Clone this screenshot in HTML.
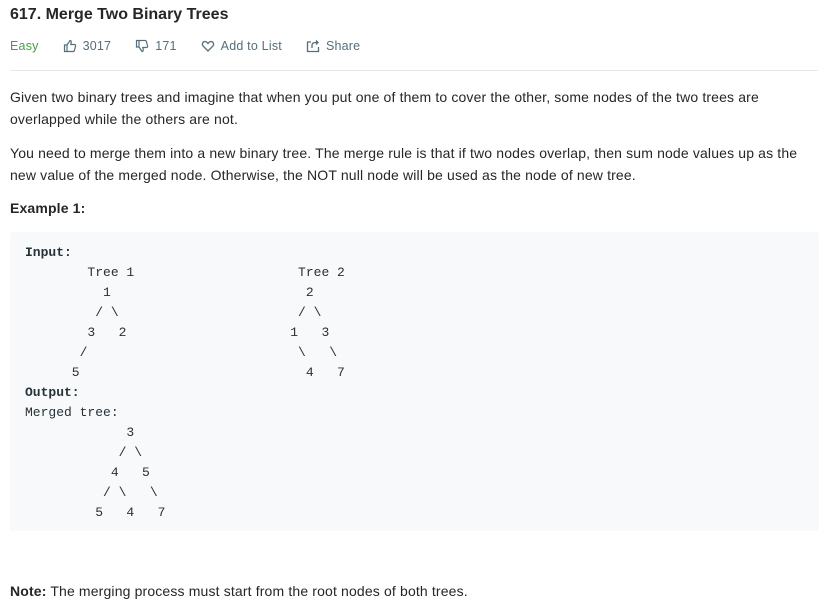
<!DOCTYPE html>
<html><head><meta charset="utf-8"><style>
body{margin:0;background:#fff;font-family:"Liberation Sans",sans-serif;color:#262626;}
h1{font-size:16px;font-weight:bold;margin:0;position:absolute;top:6px;left:10px;color:#262626;}
.meta{position:absolute;top:39px;left:10px;font-size:12.5px;color:#546e7a;display:flex;align-items:center;letter-spacing:0.2px}
.meta span{display:inline-flex;align-items:center;margin-right:24px;}
.meta svg{margin-right:6px}
.easy{color:#43a047}
hr{position:absolute;top:70px;left:10px;width:808px;border:0;border-top:1px solid #e8e8e8;margin:0}
.txt{position:absolute;left:10px;width:798px;font-size:14px;line-height:22px;letter-spacing:0.15px;}
pre{position:absolute;left:10px;top:232px;width:809px;height:299px;margin:0;background:#f7f9fa;border-radius:3px;box-sizing:border-box;padding:11px 15px;font-family:"Liberation Mono",monospace;font-size:13px;line-height:20px;color:#263238;}
</style></head><body>
<h1>617. Merge Two Binary Trees</h1>
<div class="meta">
<span class="easy">Easy</span>
<span><svg width="14" height="14" viewBox="0 0 14 14" fill="none" stroke="#546e7a" stroke-width="1.2"><path d="M1.5 6h2.5v6.5H1.5zM4 6l3-4.5c1 0 1.5.8 1.2 2L7.8 5.5h3.7c.8 0 1.3.7 1.1 1.4l-1.2 4.6c-.2.6-.6 1-1.2 1H4"/></svg>3017</span>
<span><svg width="14" height="14" viewBox="0 0 14 14" fill="none" stroke="#546e7a" stroke-width="1.2"><path d="M1.5 8h2.5V1.5H1.5zM4 8l3 4.5c1 0 1.5-.8 1.2-2L7.8 8.5h3.7c.8 0 1.3-.7 1.1-1.4L11.4 2.5c-.2-.6-.6-1-1.2-1H4"/></svg>171</span>
<span><svg width="14" height="14" viewBox="0 0 14 14" fill="none" stroke="#546e7a" stroke-width="1.3"><path d="M7 12L2 7C.8 5.5 1.5 2.5 4 2.5c1.4 0 2.3 1 3 2 .7-1 1.6-2 3-2 2.5 0 3.2 3 2 4.5z"/></svg>Add to List</span>
<span><svg width="14" height="14" viewBox="0 0 14 14" fill="none" stroke="#546e7a" stroke-width="1.3"><path d="M5 3H1.5v9.5h11V8M6 9V6.5c0-2 1.5-3 3.5-3H12M10 1.5l2 2-2 2"/></svg>Share</span>
</div>
<hr>
<div class="txt" style="top:86px">Given two binary trees and imagine that when you put one of them to cover the other, some nodes of the two trees are overlapped while the others are not.</div>
<div class="txt" style="top:142px">You need to merge them into a new binary tree. The merge rule is that if two nodes overlap, then sum node values up as the new value of the merged node. Otherwise, the NOT null node will be used as the node of new tree.</div>
<div class="txt" style="top:197px"><b>Example 1:</b></div>
<pre><b>Input:</b>
        Tree 1                     Tree 2
          1                         2
         / \                       / \
        3   2                     1   3
       /                           \   \
      5                             4   7
<b>Output:</b>
Merged tree:
             3
            / \
           4   5
          / \   \
         5   4   7</pre>
<div class="txt" style="top:580px"><b>Note:</b> The merging process must start from the root nodes of both trees.</div>
</body></html>
